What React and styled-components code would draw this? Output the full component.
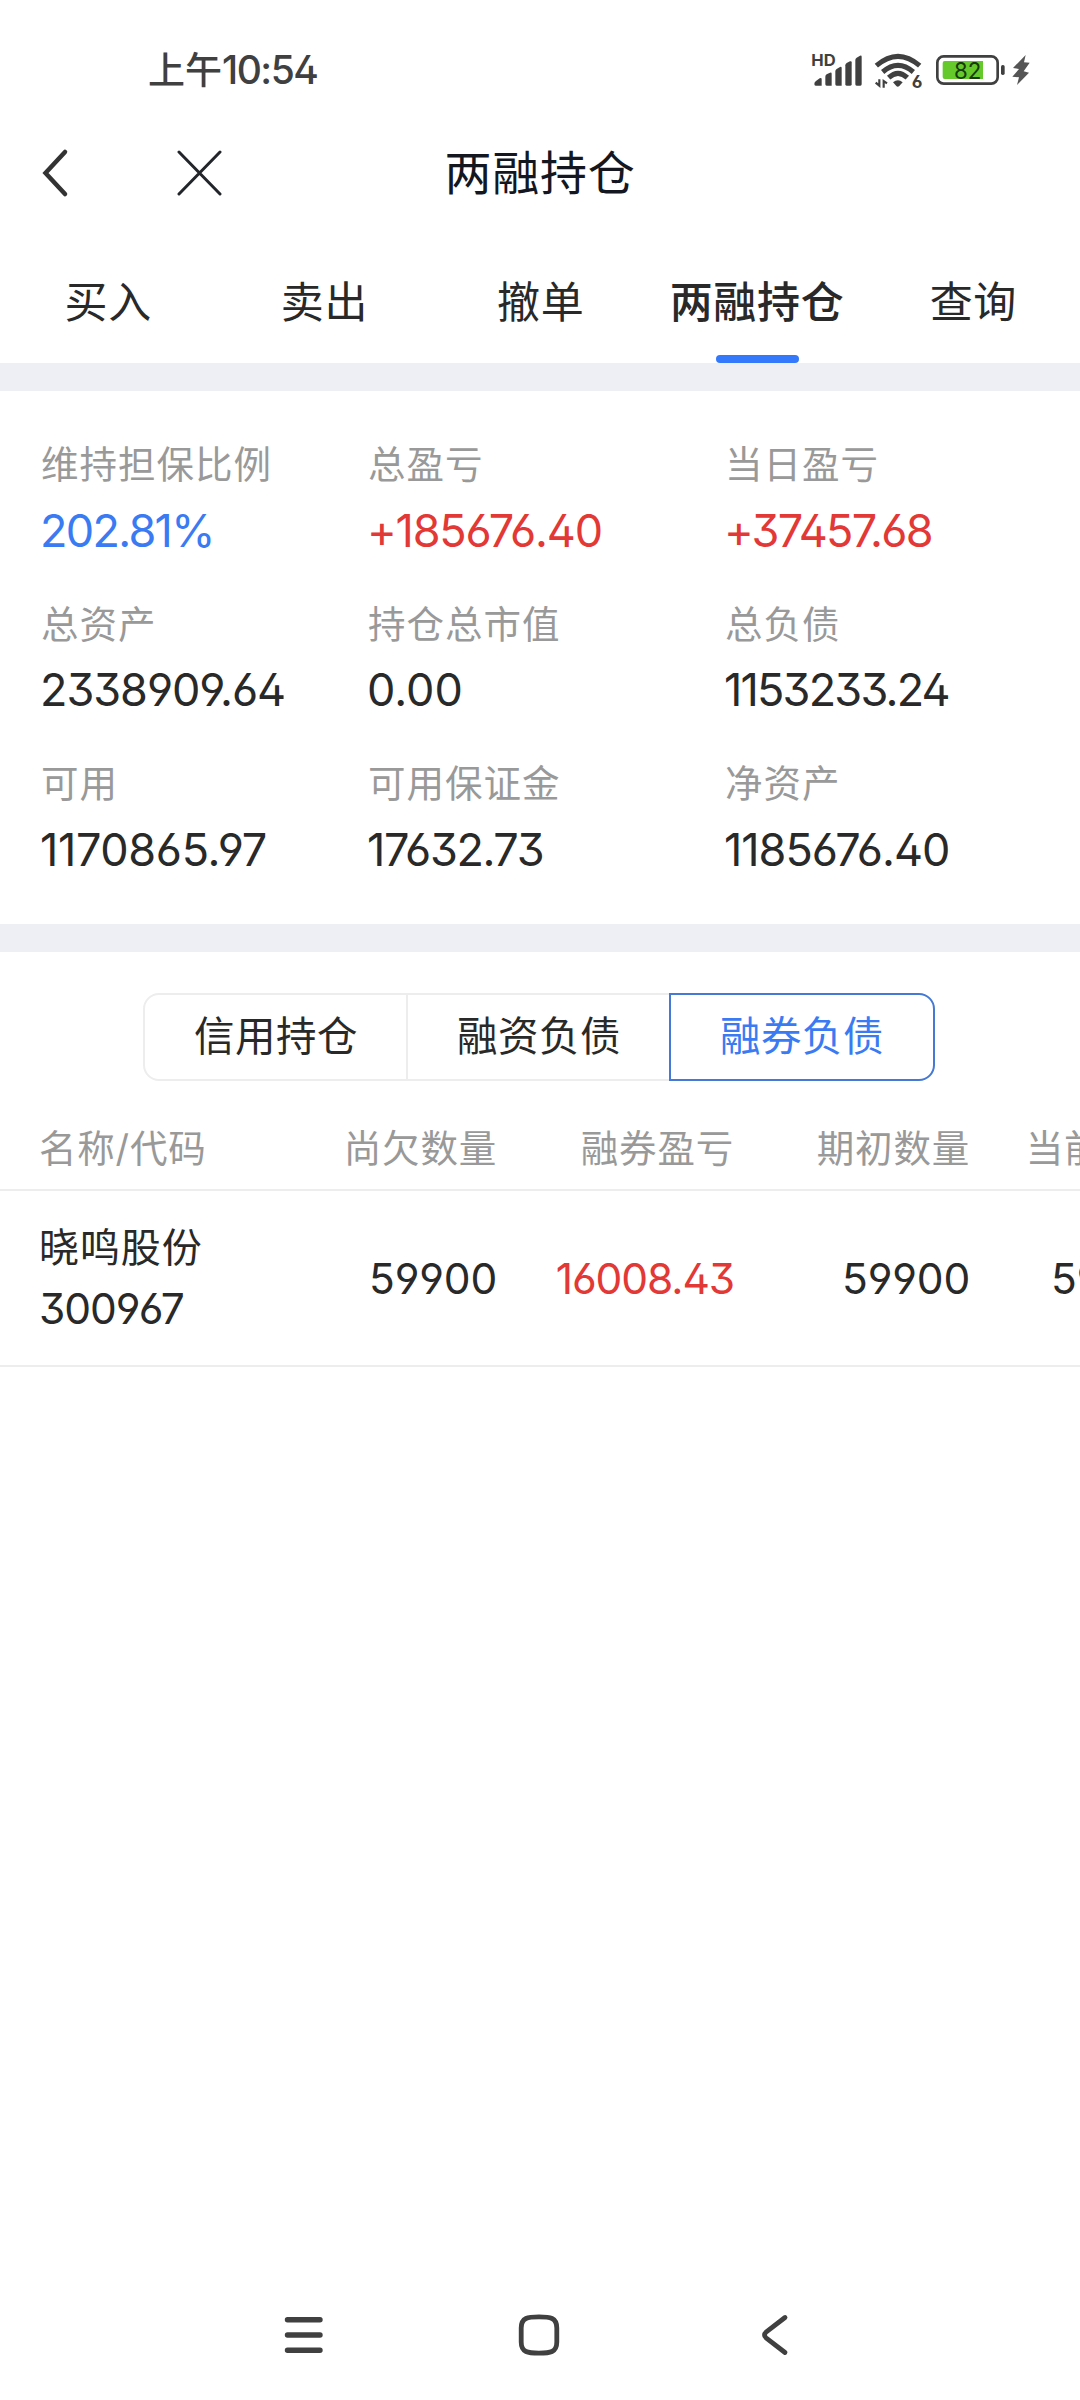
import React from 'react';
import styled, { createGlobalStyle } from 'styled-components';

const GlobalStyle = createGlobalStyle`
  * { box-sizing: border-box; }
  body {
    margin: 0;
    background: #fff;
    font-family: Inter, "Noto Sans CJK SC", sans-serif;
    font-feature-settings: "ss01";
    color: #292929;
  }
  svg { display: block; flex: none; }
`;

const Screen = styled.div`
  display: flex;
  flex-direction: column;
  width: 1080px;
  height: 2400px;
  overflow: hidden;
  background: #fff;
`;

const StatusBar = styled.header`
  display: flex;
  align-items: center;
  justify-content: space-between;
  height: 140px;
  padding: 0 20px 0 148px;
`;

const Clock = styled.span`
  font-size: 37px;
  font-weight: 500;
  line-height: 60px;
  color: #404040;
`;

const ClockDigits = styled.span`
  font-size: 39px;
  letter-spacing: -1.5px;
`;

const TitleBar = styled.div`
  display: grid;
  grid-template-columns: 1fr auto 1fr;
  align-items: center;
  height: 66px;
`;

const TitleActions = styled.div`
  display: flex;
  align-items: center;
  gap: 105.5px;
  padding-left: 40px;
`;

const Title = styled.h1`
  margin: 0;
  font-size: 47px;
  font-weight: 400;
  line-height: 66px;
  letter-spacing: 0.8px;
  color: #14171f;
`;

const Tabs = styled.nav`
  display: grid;
  grid-template-columns: repeat(5, 216.3px);
  height: 157px;
`;

const Tab = styled.div`
  display: flex;
  flex-direction: column;
  align-items: center;
  justify-content: space-between;
  padding-top: 64px;
  font-size: 43px;
  font-weight: ${p => (p.$active ? 500 : 400)};
  line-height: 64px;
  letter-spacing: 0.7px;
  white-space: nowrap;

  &::after {
    content: '';
    width: 83px;
    height: 8px;
    border-radius: 4px;
    background: ${p => (p.$active ? '#3478fc' : 'transparent')};
  }
`;

const Band = styled.div`
  flex: none;
  height: 28px;
  background: #eeeff5;
`;

const Summary = styled.section`
  display: grid;
  grid-template-columns: 327px 357px 1fr;
  grid-auto-rows: 121.5px;
  row-gap: 38px;
  height: 533px;
  padding: 49px 0 0 41px;
`;

const Metric = styled.div`
  display: flex;
  flex-direction: column;
  gap: 10.5px;
`;

const MetricLabel = styled.span`
  font-size: 37.5px;
  line-height: 50px;
  letter-spacing: 1px;
  color: #999;
`;

const tones = { blue: '#3a7af2', red: '#e23836', dark: '#292929' };

const MetricValue = styled.span`
  margin-left: -1px;
  font-size: 45px;
  line-height: 60px;
  letter-spacing: ${p => p.$track}px;
  color: ${p => tones[p.$tone]};
`;

const Segments = styled.div`
  display: flex;
  height: 88px;
  margin: 41px 0 0 143px;
`;

const Segment = styled.button`
  position: relative;
  z-index: ${p => (p.$active ? 1 : 0)};
  width: 266px;
  margin: 0 0 0 ${p => (p.$first ? 0 : -3)}px;
  padding: 0;
  border: 2px solid ${p => (p.$active ? '#4479d4' : '#ededed')};
  border-radius: ${p => (p.$first ? '16px 0 0 16px' : p.$last ? '0 16px 16px 0' : '0')};
  background: #fff;
  font: inherit;
  font-size: 40.5px;
  line-height: 60px;
  letter-spacing: 0.5px;
  color: ${p => (p.$active ? '#3a7af2' : '#292929')};
`;

const Table = styled.section`
  width: 1181px;
`;

const Row = styled.div`
  display: grid;
  grid-template-columns: 201px 257px 237px 236px 209px;
  align-items: center;
  height: ${p => (p.$head ? 110 : 176)}px;
  padding: ${p => (p.$head ? '28px' : '0')} 0 0 39px;
  border-bottom: 2px solid #ededed;
`;

const HeadCell = styled.span`
  font-size: 37.5px;
  line-height: 50px;
  letter-spacing: 0.8px;
  text-align: ${p => (p.$left ? 'left' : 'right')};
  color: #999;
`;

const Security = styled.div`
  display: flex;
  flex-direction: column;
  font-size: 40px;
  line-height: 61px;
  letter-spacing: 0.9px;
`;

const Code = styled.span`
  font-size: 42.5px;
  letter-spacing: -1.1px;
`;

const Cell = styled.span`
  padding-top: 1px;
  font-size: 42.5px;
  line-height: 60px;
  letter-spacing: ${p => p.$track}px;
  text-align: right;
  color: ${p => tones[p.$tone || 'dark']};
`;

const NavBar = styled.footer`
  display: grid;
  grid-template-columns: repeat(3, 235.5px);
  place-items: center;
  height: 130px;
  margin-top: auto;
  padding-left: 186px;
`;

const StatusIcons = () => (
  <svg width="280" height="80" viewBox="0 0 840 240" fill="#404040">
    <text x="94" y="108" fontSize="49" fontWeight="700" textLength="73" lengthAdjust="spacingAndGlyphs">HD</text>
    <path d="M103 162q0-6 5-9l11-8q6-3 6 3v19h-18q-4 0-4-5z" />
    <path d="M136 140q0-5 4-7l10-5q5-2 5 3v36h-15q-4 0-4-4z" />
    <path d="M166 124q0-5 4-7l10-6q5-2 5 3v53h-15q-4 0-4-4z" />
    <path d="M196 106q0-5 4-7l10-5q5-2 5 3v66q0 4-4 4h-11q-4 0-4-4z" />
    <path d="M226 90q0-5 4-7l10-6q5-2 5 3v83q0 4-4 4h-11q-4 0-4-4z" />
    <g fill="none" stroke="#404040" strokeWidth="15">
      <path d="M289 107q65-56 130 0" />
      <path d="M308 126q46-40 92 0" />
      <path d="M326 143q28-26 56 0" />
    </g>
    <path d="M339 157q15-13 29 0l-10 11q-5 4-9 0z" />
    <g fill="none" stroke="#404040" strokeWidth="6.500">
      <path d="M287 158l11 9v-19M311 173v-20l10 7" />
    </g>
    <text x="395" y="174" fontSize="52" fontWeight="700">6</text>
    <rect x="472" y="79" width="181" height="82" rx="19" fill="none" stroke="#404040" strokeWidth="8" />
    <path d="M494 93h115v54H494q-6 0-6-6V99q0-6 6-6z" fill="#65c92c" />
    <text x="522" y="146" fontSize="70" fontWeight="400" textLength="82" lengthAdjust="spacingAndGlyphs" fill="#173b0b">82</text>
    <rect x="663" y="105" width="11" height="30" rx="5" />
    <path d="M737 75L699 114L717 117L697 140L717 142L711 165L747 128L731 124L749 98L732 97Z" fill="#555" />
  </svg>
);

const BackIcon = () => (
  <svg width="30" height="50" viewBox="0 0 30 50" fill="none" stroke="#333" strokeWidth="4.500" strokeLinecap="round">
    <path d="M25 4L5.500 25L25 46" strokeLinejoin="miter" />
  </svg>
);

const CloseIcon = () => (
  <svg width="46" height="46" viewBox="0 0 46 46" fill="none" stroke="#22252a" strokeWidth="3" strokeLinecap="round">
    <path d="M3 2L44 44M44 2L3 44" />
  </svg>
);

const MenuIcon = () => (
  <svg width="40" height="42" viewBox="0 0 40 42" stroke="#404040" strokeWidth="5.400" strokeLinecap="round">
    <path d="M3.500 5.700H36M3.500 21H36M3.500 36.300H36" />
  </svg>
);

const HomeIcon = () => (
  <svg width="42" height="42" viewBox="0 0 42 42" fill="none" stroke="#404040" strokeWidth="4.800">
    <path d="M21 2.900C32 2.900 38.800 3.500 38.800 14V28C38.800 38.500 32 39.100 21 39.100C10 39.100 3.200 38.500 3.200 28V14C3.200 3.500 10 2.900 21 2.900Z" />
  </svg>
);

const ReturnIcon = () => (
  <svg width="28" height="42" viewBox="0 0 28 42" fill="none" stroke="#404040" strokeWidth="4.800" strokeLinecap="round" strokeLinejoin="round">
    <path d="M24 3.500L5 18.200Q2 21 5 23.800L24 38.500" />
  </svg>
);

const tabs = ['买入', '卖出', '撤单', '两融持仓', '查询'];

const metrics = [
  ['维持担保比例', '202.81%', 'blue', -1.7],
  ['总盈亏', '+185676.40', 'red', -1.2],
  ['当日盈亏', '+37457.68', 'red', -1.7],
  ['总资产', '2338909.64', 'dark', -1.05],
  ['持仓总市值', '0.00', 'dark', 0],
  ['总负债', '1153233.24', 'dark', -1.8],
  ['可用', '1170865.97', 'dark', -0.35],
  ['可用保证金', '17632.73', 'dark', -1.4],
  ['净资产', '1185676.40', 'dark', -1],
];

const segments = ['信用持仓', '融资负债', '融券负债'];
const headings = ['名称/代码', '尚欠数量', '融券盈亏', '期初数量', '当前数量'];

export default function App() {
  return (
    <>
      <GlobalStyle />
      <Screen>
        <StatusBar>
          <Clock>上午<ClockDigits>10:54</ClockDigits></Clock>
          <StatusIcons />
        </StatusBar>
        <TitleBar>
          <TitleActions>
            <BackIcon />
            <CloseIcon />
          </TitleActions>
          <Title>两融持仓</Title>
        </TitleBar>
        <Tabs>
          {tabs.map(name => (
            <Tab key={name} $active={name === '两融持仓'}>{name}</Tab>
          ))}
        </Tabs>
        <Band />
        <Summary>
          {metrics.map(([label, value, tone, track]) => (
            <Metric key={label}>
              <MetricLabel>{label}</MetricLabel>
              <MetricValue $tone={tone} $track={track}>{value}</MetricValue>
            </Metric>
          ))}
        </Summary>
        <Band />
        <Segments>
          {segments.map((name, i) => (
            <Segment key={name} $first={i === 0} $last={i === 2} $active={i === 2}>{name}</Segment>
          ))}
        </Segments>
        <Table>
          <Row $head>
            {headings.map((name, i) => (
              <HeadCell key={name} $left={i === 0}>{name}</HeadCell>
            ))}
          </Row>
          <Row>
            <Security>
              晓鸣股份
              <Code>300967</Code>
            </Security>
            <Cell $track={-0.2}>59900</Cell>
            <Cell $track={-1.1} $tone="red">16008.43</Cell>
            <Cell $track={-0.2}>59900</Cell>
            <Cell $track={-0.2}>59900</Cell>
          </Row>
        </Table>
        <NavBar>
          <MenuIcon />
          <HomeIcon />
          <ReturnIcon />
        </NavBar>
      </Screen>
    </>
  );
}
